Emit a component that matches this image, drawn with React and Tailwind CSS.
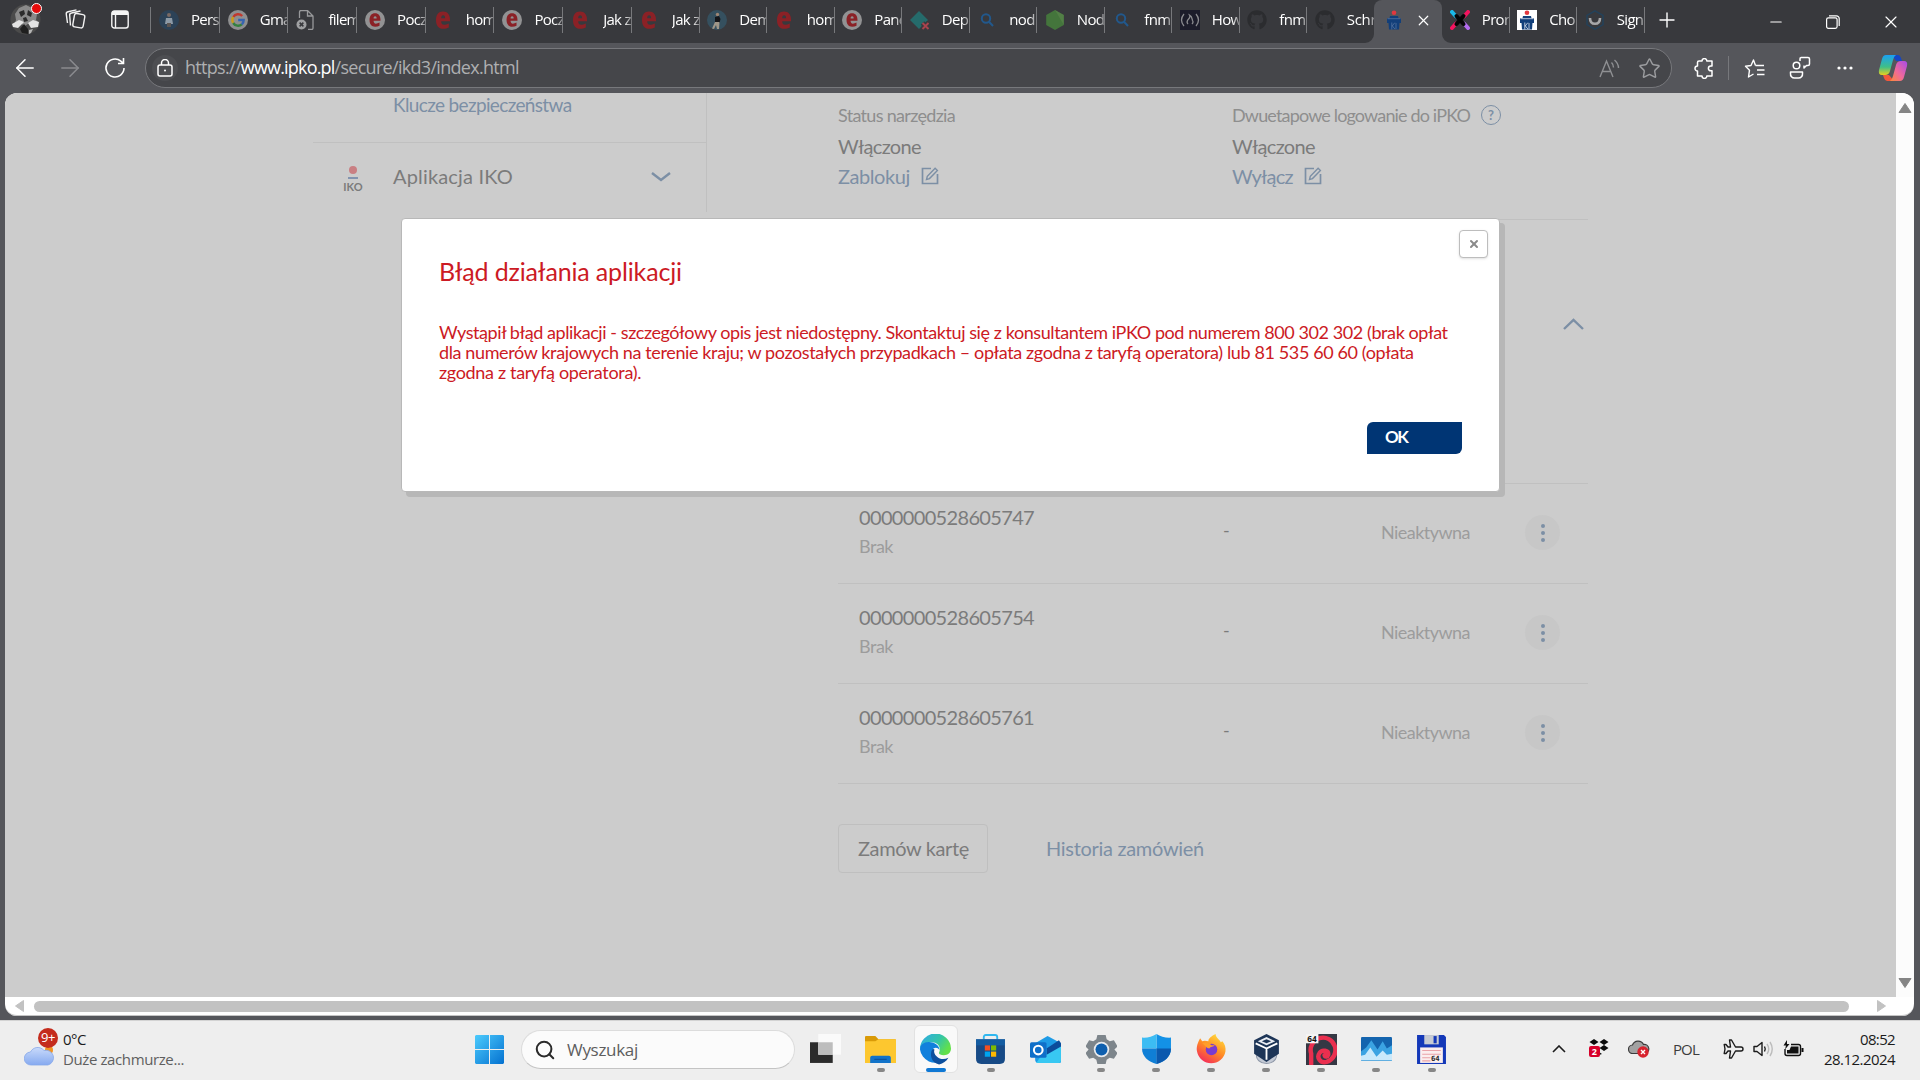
import { Plus, X, Minus, ArrowLeft, ArrowRight, Star, Search } from "lucide-react";
import { FaGithub } from "react-icons/fa";

/* ---------- favicons ---------- */

function Favicon({ kind }) {
  const s = { width: 20, height: 20, viewBox: "0 0 20 20", className: "shrink-0" };
  switch (kind) {
    case "person":
      return (
        <svg {...s}>
          <circle cx="10" cy="10" r="10" fill="#2c4257" />
          <circle cx="10" cy="5" r="2" fill="#7a6a64" />
          <path d="M7 8h6l1 6H6z" fill="#8d9aa6" />
          <path d="M8 13h4v4H8z" fill="#5c5552" />
        </svg>
      );
    case "walker":
      return (
        <svg {...s}>
          <circle cx="10" cy="10" r="10" fill="#35505f" />
          <circle cx="10.500" cy="4.500" r="1.700" fill="#9c8573" />
          <path d="M8 7l4-1 1.500 3-1 4H8z" fill="#14161a" />
          <path d="M8 12h4.500l-.5 7h-2l-1-4-2 4-2-.5z" fill="#9d9689" />
        </svg>
      );
    case "google":
      return (
        <svg {...s}>
          <circle cx="10" cy="10" r="10" fill="#8f8f90" />
          <g fill="none" strokeWidth="2.400">
            <path d="M14.200 6A5.700 5.700 0 0 0 5.200 7" stroke="#c0392f" />
            <path d="M5.200 7a5.700 5.700 0 0 0 0 6" stroke="#c99b1c" />
            <path d="M5.200 13a5.700 5.700 0 0 0 8.600 1.300" stroke="#34803f" />
            <path d="M13.800 14.300A5.700 5.700 0 0 0 15.700 10H10.200" stroke="#3564b0" />
          </g>
        </svg>
      );
    case "file":
      return (
        <svg {...s} fill="none" stroke="#98999b" strokeWidth="1.300">
          <path d="M3.500 8V2a1.500 1.500 0 0 1 1.500-1.500h6.500L17 6v12a1.500 1.500 0 0 1-1.500 1.500H12M11.500.500V6H17" />
          <circle cx="5.500" cy="14.500" r="5" fill="#9fa0a2" stroke="none" />
          <path d="M3.600 12.600l3.800 3.800M7.400 12.600l-3.800 3.800" stroke="#38393d" strokeWidth="1.500" />
        </svg>
      );
    case "ering":
    case "e":
      return (
        <svg {...s}>
          {kind === "ering" && <circle cx="10" cy="10" r="10" fill="#929293" />}
          <path
            transform={kind === "ering" ? "translate(2.200 2.100) scale(.78)" : "translate(-1 0)"}
            fillRule="evenodd"
            d="M10 1.500c4.600 0 7 3.300 7 8v1.700H8.200c0 2.400 1 3.600 2.900 3.600 1.500 0 2.900-.5 4.700-1.400v4c-1.700.9-3.500 1.400-5.600 1.400C5.500 18.800 3 15.400 3 10.200 3 4.900 5.500 1.500 10 1.500zM8.200 8.200h3.900c0-1.900-.6-2.900-1.900-2.900s-2 1-2 2.900z"
            fill="#8b2126"
          />
        </svg>
      );
    case "diamond":
      return (
        <svg {...s}>
          <path d="M9 1l9 9-9 9-9-9z" fill="#256b6b" />
          <path d="M12.500 13l6 6M18.500 13l-6 6" stroke="#38393d" strokeWidth="5" />
          <path d="M12.500 13l6 6M18.500 13l-6 6" stroke="#a8434d" strokeWidth="1.900" />
        </svg>
      );
    case "search":
      return (
        <svg {...s} fill="none" stroke="#22588c" strokeWidth="2">
          <circle cx="9" cy="8.500" r="4.200" />
          <path d="M12 11.700l4 4.300" />
        </svg>
      );
    case "node":
      return (
        <svg {...s}>
          <path d="M10 0l8.800 5v10L10 20 1.200 15V5z" fill="#44753c" />
          <path d="M10 0l8.800 5v10z" fill="#58834a" opacity=".7" />
        </svg>
      );
    case "fcc":
      return (
        <svg {...s}>
          <rect width="20" height="20" fill="#1c1c2b" />
          <g fill="none" stroke="#8b8b90" strokeWidth="1.300">
            <path d="M4 4q-5 6 0 12M16 4q5 6 0 12M8 14c-2-2-.5-4 1-5.500C10 7.500 10 6 9.500 5c3 1.500 2.500 4.500 3 5.500 1 1.500.5 2.500-.5 3.500" />
          </g>
        </svg>
      );
    case "github":
      return <FaGithub className="size-5 shrink-0 text-[#2b2c2f]" />;
    case "pko":
    case "pkow":
      return (
        <svg {...s}>
          {kind === "pkow" && <rect width="20" height="20" fill="#fff" />}
          <circle cx="10" cy="2.700" r="2.300" fill="#e2383f" />
          <path d="M6 6h8l.5 2.200H17V13h-1.500l-.5 6.500H5L4.500 13H3V8.200h2.500z" fill="#123f7a" />
          <path d="M3.500 8.700h13M7.800 12.500v7M8.200 16l2.600-3.300M8.200 15.700l2.800 3.500M12 13v6" stroke={kind === "pkow" ? "#dfe6f0" : "#55749f"} strokeWidth=".8" fill="none" />
        </svg>
      );
    case "xcolor":
      return (
        <svg {...s} strokeWidth="4" strokeLinecap="round">
          <path d="M2 2l4 4.500" stroke="#19b9e8" />
          <path d="M18 2l-4 4.500" stroke="#f5145f" />
          <path d="M2 18l4-4.500" stroke="#f5145f" />
          <path d="M18 18l-4-4.500" stroke="#b46cf0" />
          <path d="M6.500 6l7 8M13.500 6l-7 8" stroke="#050505" strokeWidth="4" />
        </svg>
      );
    default:
      return (
        <svg {...s} fill="none">
          <path d="M10 .800l8 4.600v9.200l-8 4.600-8-4.600V5.400z" stroke="#23415a" strokeWidth="1.500" />
          <path d="M5 8c0 4 2 5.800 5 5.800S15 12 15 8" stroke="#a6a7a9" strokeWidth="2.600" />
        </svg>
      );
  }
}

function Tab({ icon, label, wide }) {
  return (
    <div className={`flex h-[43px] shrink-0 items-center pl-2 ${wide ? "w-[68.700px]" : "w-[67.500px]"}`}>
      <div className="mb-1 flex h-[26px] flex-1 items-center border-r border-[#77787b]">
        <Favicon kind={icon} />
        <span className="-mt-0.5 ml-3 w-[27px] flex-1 overflow-hidden whitespace-nowrap text-[15px] leading-6 tracking-[-0.700px] text-white [mask-image:linear-gradient(to_right,#000_75%,#0006)]">
          {label}
        </span>
      </div>
    </div>
  );
}

const firstTabs = [
  ["person", "Pers"], ["google", "Gma"], ["file", "filem"], ["ering", "Pocz"], ["e", "hom"], ["ering", "Pocz"], ["e", "Jak z"],
];
const middleTabs = [
  ["e", "Jak z"], ["walker", "Dem"], ["e", "hom"], ["ering", "Pane"], ["diamond", "Dep"], ["search", "nod"],
  ["node", "Nod"], ["search", "fnm"], ["fcc", "How"], ["github", "fnm"],
];
const lastTabs = [["xcolor", "Pror"], ["pkow", "Cho"], ["sign", "Sign"]];

function TabStrip() {
  return (
    <div className="flex h-[43px] items-start bg-[#38393d]">
      <div className="flex h-[43px] w-[151px] shrink-0 items-center pb-1 pl-[10px]">
        <div className="relative size-[31px]">
          <svg width="31" height="31" viewBox="0 0 31 31">
            <circle cx="15.500" cy="15.500" r="15" fill="#4b4b4b" />
            <path d="M5 10l4-6 7-3 6 3 5 6-1 6 2 2-4 2-5-1-4 3-5-3-6 2 2-5z" fill="#8a8a8a" />
            <path d="M9 8l5-2 1 4-4 3zM18 6l4 3-1 4-4-2zM13 14l3-1 2 4-4 1z" fill="#2b2b2b" />
            <path d="M2 20l7-4 5 2-6 6-5-1zM18 19l5-3 6 2-1 5-7 1z" fill="#e4e4e4" />
            <path d="M10 25l4-5 4 5 0 5-6-1z" fill="#1f1f1f" />
            <path d="M19 26l4-1-2 4-2 1z" fill="#b5b5b5" />
          </svg>
          <span className="absolute -top-px right-[-1px] size-[11px] rounded-full border border-white bg-[#e50b0b]" />
        </div>
        <svg className="ml-6" width="21" height="21" viewBox="0 0 21 21" fill="none" stroke="#f2f2f2" strokeWidth="1.400">
          <rect x="8.500" y="5" width="10.500" height="13.500" rx="2.200" transform="rotate(10 14 12)" />
          <path d="M5.500 16.500l-.8-10A2.200 2.200 0 0 1 6.500 4l9-2M2.500 14L1.300 5.300A2.200 2.200 0 0 1 3 2.800L11.500.900" />
        </svg>
        <svg className="ml-[25px]" width="18" height="19" viewBox="0 0 18 19" fill="none" stroke="#f5f5f5" strokeWidth="1.400">
          <rect x=".8" y="1" width="16.400" height="17" rx="2.500" />
          <path d="M1 3h16" strokeWidth="4" />
          <path d="M4.500 4v14" />
        </svg>
        <span className="ml-auto h-[26px] w-px bg-[#77787b]" />
      </div>
      {firstTabs.map(([icon, label], i) => <Tab key={i} icon={icon} label={label} wide />)}
      {middleTabs.map(([icon, label], i) => <Tab key={i} icon={icon} label={label} />)}
      <div className="flex h-[43px] w-[67px] shrink-0 items-center pb-1 pl-[8px]">
        <Favicon kind="github" />
        <span className="-mt-0.5 ml-3 flex-1 overflow-hidden whitespace-nowrap text-[15px] leading-6 tracking-[-0.300px] text-white [mask-image:linear-gradient(to_right,#000_75%,#0006)]">Schr</span>
      </div>
      <div className="relative flex h-[43px] w-[68px] shrink-0 items-center rounded-t-lg bg-[#55565b] pb-1 pl-[10px]">
        <svg className="absolute bottom-0 left-[-9px]" width="9" height="9"><path d="M9 0v9H0a9 9 0 0 0 9-9z" fill="#55565b" /></svg>
        <svg className="absolute bottom-0 right-[-9px]" width="9" height="9"><path d="M0 0v9h9a9 9 0 0 1-9-9z" fill="#55565b" /></svg>
        <Favicon kind="pko" />
        <X className="ml-[11px] mt-0.5 size-[17px] text-white" strokeWidth={1.7} />
      </div>
      {lastTabs.map(([icon, label], i) => <Tab key={i} icon={icon} label={label} />)}
      <div className="flex h-[43px] flex-1 items-center justify-between pb-1 pl-[11px] pr-[19px]">
        <Plus className="size-6 text-white" strokeWidth={1.4} />
        <div className="mt-1 flex items-center gap-[41px] text-white">
          <Minus className="size-[18px]" strokeWidth={1.4} />
          <svg width="14" height="14" viewBox="0 0 14 14" fill="none" stroke="#fff" strokeWidth="1.200">
            <rect x=".6" y="2.800" width="10.500" height="10.500" rx="1.800" />
            <path d="M3 .8h7.400a2.800 2.800 0 0 1 2.800 2.800V11" />
          </svg>
          <X className="size-[20px]" strokeWidth={1.4} />
        </div>
      </div>
    </div>
  );
}

function Toolbar() {
  return (
    <div className="flex h-[50px] items-center bg-[#55565b] text-white">
      <ArrowLeft className="ml-[11px] size-7 shrink-0" strokeWidth={1.3} />
      <ArrowRight className="ml-[17px] size-7 shrink-0 text-[#8a8b8f]" strokeWidth={1.3} />
      <svg className="ml-[20px] shrink-0" width="22" height="22" viewBox="0 0 22 22" fill="none" stroke="#fff" strokeWidth="1.600">
        <path d="M20 11a9 9 0 1 1-3.200-6.900L19 6M19.500 1v5.500H14" />
      </svg>
      <div className="ml-[19px] flex h-10 w-[1527px] shrink-0 items-center rounded-full border border-[#77787c] bg-[#45464a] pl-[6px] pr-[10px]">
        <span className="flex size-[26px] items-center justify-center rounded-full bg-[#4d4e52]">
          <svg width="16" height="18" viewBox="0 0 16 18" fill="none" stroke="#fff" strokeWidth="1.500">
            <rect x="1" y="6" width="14" height="11" rx="2" />
            <path d="M4.500 6V4a3.500 3.500 0 0 1 7 0v2" />
            <circle cx="8" cy="11.500" r="1" fill="#fff" stroke="none" />
          </svg>
        </span>
        <span className="-mt-0.5 ml-[7px] whitespace-nowrap text-[18px] leading-7 tracking-[-0.7px] text-[#aeafb1]">
          https://<span className="tracking-[-0.820px] text-white">www.ipko.pl</span>/secure/ikd3/index.html
        </span>
        <svg className="ml-auto" width="21" height="19" viewBox="0 0 21 19" fill="none" stroke="#8f9093" strokeWidth="1.400">
          <path d="M1 18L7.500 2 14 18M3.300 12.500h8.400M12.500 3.500q2 2 2 5M15.500 1q4 3.500 4 8" />
        </svg>
        <Star className="ml-[18px] size-[23px] text-[#9b9c9f]" strokeWidth={1.5} />
      </div>
      <svg className="ml-[22px] shrink-0" width="20" height="21" viewBox="0 0 20 21" fill="none" stroke="#fff" strokeWidth="1.500">
        <path d="M5 3h3a2.400 2.400 0 0 1 4.800 0H18v5h-1.200a2.400 2.400 0 0 0 0 4.800H18v5.200h-5.200a2.400 2.400 0 0 1-4.800 0H3.500v-5a2.500 2.500 0 0 1 0-5V4.500A1.500 1.500 0 0 1 5 3z" strokeLinejoin="round" />
      </svg>
      <span className="ml-[14px] h-6 w-px bg-[#77787c]" />
      <svg className="ml-[15px] shrink-0" width="22" height="21" viewBox="0 0 22 21" fill="none" stroke="#fff" strokeWidth="1.400" strokeLinejoin="round">
        <path d="M11.500 7.500L9.500 2 7 7.500l-5.500.7 4 4L4.500 19l5-3M11.500 7.500H20M13 12h7.500M13 16.500h7.500" />
      </svg>
      <svg className="ml-[23px] shrink-0" width="22" height="24" viewBox="0 0 22 24" fill="none" stroke="#fff" strokeWidth="1.500" strokeLinejoin="round">
        <circle cx="7.500" cy="9.500" r="3.300" />
        <path d="M1.500 16h12v1.500a4 4 0 0 1-4 4.500h-4a4 4 0 0 1-4-4.500zM12 1.500h7a1.500 1.500 0 0 1 1.500 1.500v5A1.500 1.500 0 0 1 19 9.500h-1.500L15 12V9.500M12 1.500A1.500 1.500 0 0 0 11 3v2" />
      </svg>
      <svg className="ml-[25px] shrink-0" width="18" height="6" fill="#fff">
        <circle cx="3" cy="3" r="1.600" /><circle cx="9" cy="3" r="1.600" /><circle cx="15" cy="3" r="1.600" />
      </svg>
      <svg className="ml-[24px] shrink-0" width="30" height="28" viewBox="0 0 30 28">
        <defs>
          <linearGradient id="cpa" x1="0" y1="0" x2="0" y2="1"><stop stopColor="#1ba1f2" /><stop offset=".6" stopColor="#3fbf87" /><stop offset="1" stopColor="#e8d01f" /></linearGradient>
          <linearGradient id="cpb" x1="1" y1="0" x2="0" y2="1"><stop stopColor="#a84be8" /><stop offset=".55" stopColor="#f0699a" /><stop offset="1" stopColor="#fb8b3a" /></linearGradient>
        </defs>
        <path d="M14 1h6q2 0 3 3l1 3h-6z" fill="#1546c4" />
        <path d="M8 1h10q-2 1-3 5l-3 11q-1 4-5 4H4q-4 0-3-5L4 5q1-4 4-4z" fill="url(#cpa)" />
        <path d="M16 27H9q-2 0-3-3l-1-3h6z" fill="#f4573c" />
        <path d="M22 27H12q2-1 3-5l3-11q1-4 5-4h3q4 0 3 5l-3 11q-1 4-4 4z" fill="url(#cpb)" />
      </svg>
    </div>
  );
}

/* ---------- bank page ---------- */

function EditIcon() {
  return (
    <svg className="ml-[11px] shrink-0" width="18" height="18" viewBox="0 0 18 18" fill="none" stroke="#7c8fa5" strokeWidth="1.700">
      <path d="M10 1.500H1.500v15h15V7" />
      <path d="M5.500 12.500l.8-3.200 7.800-8 2.300 2.300-7.900 8z" strokeWidth="1.400" />
    </svg>
  );
}

function ToolStatus({ title, action, help, actionClass }) {
  return (
    <div className="w-[394px] shrink-0">
      <div className="flex h-6 items-center whitespace-nowrap text-[18px] leading-6 text-[#8e8e8e]">
        <span className={help ? "tracking-[-0.840px]" : "tracking-[-0.690px]"}>{title}</span>
        {help && (
          <span className="ml-[11px] flex size-5 items-center justify-center rounded-full border-[1.500px] border-[#7c8fa5] text-[13px] font-bold leading-none text-[#7c8fa5]">?</span>
        )}
      </div>
      <div className="mt-[7px] text-[20px] leading-6 tracking-[-0.650px] text-[#7b7b7b]">Włączone</div>
      <div className="mt-[6px] flex h-6 items-center text-[20px] leading-6 text-[#7c8fa5]">
        <span className={actionClass}>{action}</span>
        <EditIcon />
      </div>
    </div>
  );
}

function CardRow({ number }) {
  return (
    <div className="flex h-[100px] items-center border-b border-[#c0c0c0] pb-0.5 pl-[21px]">
      <div className="w-[364px] pb-0.5">
        <div className="text-[20px] leading-6 tracking-[-0.660px] text-[#7b7b7b]">{number}</div>
        <div className="mt-[5px] text-[18px] leading-6 tracking-[-0.480px] text-[#9c9c9c]">Brak</div>
      </div>
      <div className="w-[158px] pb-1.5 text-[18px] leading-6 text-[#7b7b7b]">-</div>
      <div className="w-[144px] pb-0.5 text-[18px] leading-6 tracking-[-0.540px] text-[#9c9c9c]">Nieaktywna</div>
      <div className="flex size-[35px] flex-col items-center justify-center gap-[3px] rounded-full bg-[#c7c7c7]">
        <span className="size-1 rounded-full bg-[#7c8fa5]" />
        <span className="size-1 rounded-full bg-[#7c8fa5]" />
        <span className="size-1 rounded-full bg-[#7c8fa5]" />
      </div>
    </div>
  );
}

function BankPage() {
  return (
    <div className="flex h-[904px] flex-1 bg-[#cccccc] pl-[308px] font-['Lato',sans-serif]">
      <aside className="h-[119px] w-[394px] shrink-0 border-r border-[#c0c0c0]">
        <div className="h-[50px] border-b border-[#c0c0c0] pl-[80px]">
          <div className="text-[19px] leading-6 tracking-[-0.640px] text-[#7c8fa5]">Klucze bezpieczeństwa</div>
        </div>
        <div className="flex h-[67px] items-center pl-[30px]">
          <div className="mt-1.5 flex w-5 flex-col items-center">
            <span className="size-2 rounded-full bg-[#c97f83]" />
            <span className="mt-[3px] h-[2px] w-[10px] bg-[#8294b0]" />
            <span className="mt-[2px] text-[11px] font-bold leading-[12px] text-[#7b7b7b]">IKO</span>
          </div>
          <span className="mb-0.5 ml-[30px] w-[258px] text-[20px] leading-6 tracking-[0.170px] text-[#7b7b7b]">Aplikacja IKO</span>
          <svg width="20" height="10" viewBox="0 0 20 10" fill="none" stroke="#7c8fa5" strokeWidth="2.400"><path d="M1 1l9 7 9-7" /></svg>
        </div>
      </aside>
      <section className="ml-[131px] w-[750px]">
        <div className="flex h-[127px] border-b border-[#c0c0c0] pt-[10px]">
          <ToolStatus title="Status narzędzia" action="Zablokuj" actionClass="tracking-[-0.440px]" />
          <ToolStatus title="Dwuetapowe logowanie do iPKO" action="Wyłącz" actionClass="tracking-[-0.800px]" help />
        </div>
        <div className="flex h-[264px] justify-end border-b border-[#c0c0c0] pr-1 pt-[98px]">
          <svg width="21" height="13" viewBox="0 0 21 13" fill="none" stroke="#7c8fa5" strokeWidth="2.400"><path d="M1 11l9.500-9L20 11" /></svg>
        </div>
        <CardRow number="0000000528605747" />
        <CardRow number="0000000528605754" />
        <CardRow number="0000000528605761" />
        <div className="mt-10 flex items-center whitespace-nowrap text-[20px] leading-6">
          <div className="flex h-[49px] w-[150px] items-center rounded border border-[#bfbfbf] pb-0.5 pl-[19px] tracking-[-0.370px] text-[#7b7b7b]">Zamów kartę</div>
          <div className="ml-[58px] pb-0.5 tracking-[-0.300px] text-[#7c8fa5]">Historia zamówień</div>
        </div>
      </section>
    </div>
  );
}

function ErrorDialog() {
  return (
    <div className="absolute left-[396px] top-[125px] h-[274px] w-[1099px] rounded border border-[#b8b8b8] bg-white font-['Lato',sans-serif] text-[#cc1a24] shadow-[5px_5px_0_#b7b7b7]">
      <button className="absolute right-[11px] top-[11px] flex h-7 w-[29px] items-center justify-center rounded border border-[#bdbdbd] bg-white shadow-sm">
        <X className="size-3 text-[#8a8a8a]" strokeWidth={4} />
      </button>
      <div className="pl-[37px] pt-[36px]">
        <h1 className="text-[25px] leading-8 tracking-[-0.150px]">Błąd działania aplikacji</h1>
        <p className="mt-[35px] whitespace-nowrap text-[18px] leading-5">
          <span className="block tracking-[-0.420px]">Wystąpił błąd aplikacji - szczegółowy opis jest niedostępny. Skontaktuj się z konsultantem iPKO pod numerem 800 302 302 (brak opłat</span>
          <span className="block tracking-[-0.380px]">dla numerów krajowych na terenie kraju; w pozostałych przypadkach – opłata zgodna z taryfą operatora) lub 81 535 60 60 (opłata</span>
          <span className="block tracking-[-0.320px]">zgodna z taryfą operatora).</span>
        </p>
        <button className="ml-[928px] mt-10 block h-8 w-[95px] rounded-br-md rounded-tl-md bg-[#003574] pb-0.5 pl-[18px] text-left text-[17px] font-bold leading-[30px] tracking-[-1.500px] text-white">OK</button>
      </div>
    </div>
  );
}

function Viewport() {
  return (
    <div className="h-[927px] bg-[#55565b] pl-[5px] pr-[6px]">
      <main className="relative h-[923px] w-[1909px] rounded-xl bg-white">
        <div className="h-full overflow-hidden rounded-xl border-b border-[#c4c4c4]">
          <div className="flex">
            <BankPage />
            <div className="flex h-[904px] w-[18px] flex-col items-center justify-between bg-[#fcfcfc] pb-[9px] pt-[10px]">
              <svg width="14" height="10"><path d="M7 .500L13 9.500H1z" fill="#858585" stroke="#858585" strokeLinejoin="round" /></svg>
              <svg width="14" height="10"><path d="M7 9.500L13 .500H1z" fill="#858585" stroke="#858585" strokeLinejoin="round" /></svg>
            </div>
          </div>
          <div className="flex h-[18px] items-center pl-[10px]">
            <svg width="9" height="12"><path d="M.500 6L8.500.500v11z" fill="#c2c2c2" stroke="#c2c2c2" strokeLinejoin="round" /></svg>
            <span className="ml-[10px] h-[11px] w-[1815px] rounded-full bg-[#c2c2c2]" />
            <svg className="ml-[28px]" width="9" height="12"><path d="M8.500 6L.500.500v11z" fill="#c2c2c2" stroke="#c2c2c2" strokeLinejoin="round" /></svg>
          </div>
        </div>
        <ErrorDialog />
      </main>
    </div>
  );
}

/* ---------- taskbar ---------- */

function AppIcon({ kind }) {
  const s = { width: 31, height: 31, viewBox: "0 0 30 30" };
  switch (kind) {
    case "taskview":
      return (
        <svg {...s}>
          <rect x="0" y="8" width="22" height="20" fill="#2b2b2b" />
          <rect x="8" y="0" width="22" height="20" fill="#fafafa" />
          <rect x="8" y="8" width="14" height="12" fill="#bdbdbd" />
        </svg>
      );
    case "folder":
      return (
        <svg {...s}>
          <path d="M0 3q0-1 1-1h9l3 3h16q1 0 1 1v6H0z" fill="#d99a07" />
          <path d="M0 7h10l3-2h16q1 0 1 1v22H0z" fill="#fdc72f" />
          <path d="M5 28v-5q0-2 2-2h16q2 0 2 2v5z" fill="#1273c9" />
          <path d="M9 24.500h12" stroke="#0b4f98" />
        </svg>
      );
    case "edge":
      return (
        <svg {...s}>
          <defs>
            <linearGradient id="ea" x1="0" x2="1" y2=".5"><stop stopColor="#2fa8ea" /><stop offset=".6" stopColor="#34c5a8" /><stop offset="1" stopColor="#62e04a" /></linearGradient>
          </defs>
          <path d="M0 15a15 15 0 0 1 30-1c0 4-3 6.500-7 6.500-3.500 0-5.500-1.200-4.300-3.200C20.500 12.500 17 8 11.500 8 6 8 1 11 0 15z" fill="url(#ea)" />
          <path d="M0 15c0-5 5-8 10-7 5 .4 9 3.500 8.800 7.500-2-3.500-6.500-2.500-7 1-.5 5 5 9.500 11.200 9 A15 15 0 0 1 0 15z" fill="#1180dc" />
          <path d="M11.800 15C9 20 11 28 18.500 29.500c4-1 7-3 9-6.500-4 2-8.500 1.500-11-1-2.700-2.300-3.400-5-2.500-7-.8-.8-1.700-.8-2.200 0z" fill="#0c4f9e" />
        </svg>
      );
    case "store":
      return (
        <svg {...s}>
          <path d="M8.500 5V3q0-2 2-2h9q2 0 2 2v2" fill="none" stroke="#2fb7ef" strokeWidth="1.800" />
          <path d="M1 5h28v19q0 5-5 5H6q-5 0-5-5z" fill="#174a86" />
          <path d="M1 5h28v6H1z" fill="#1464ad" opacity=".7" />
          <path d="M9.500 11h5v5h-5z" fill="#f25022" /><path d="M15.500 11h5v5h-5z" fill="#7fba00" />
          <path d="M9.500 17h5v5h-5z" fill="#00a4ef" /><path d="M15.500 17h5v5h-5z" fill="#ffb900" />
        </svg>
      );
    case "outlook":
      return (
        <svg {...s}>
          <path d="M5 9L17 2l13 7v18q0 1-2 1H8q-3 0-3-3z" fill="#1e9be6" />
          <path d="M15 15L30 9v17q0 2-2 2H6z" fill="#38c8f2" />
          <path d="M16 14L28 6l2 3v3L16 20z" fill="#0c4b9b" />
          <rect y="8" width="16" height="15" rx="1.500" fill="#0f6fc9" />
          <circle cx="8" cy="15.500" r="4.200" fill="none" stroke="#fff" strokeWidth="2" />
        </svg>
      );
    case "settings":
      return (
        <svg {...s}>
          <path d="M11 1h8l1 4 3 2 4-1 3.500 6-3 3 3 3.500L27 24l-4-1-3 2-1 4h-8l-1-4-3-2-4 1-3.500-5.500 3-3.500-3-3L3 6l4 1 3-2z" fill="#7d858b" />
          <circle cx="15" cy="15" r="7.500" fill="#e8ebee" />
          <circle cx="15" cy="15" r="5.800" fill="#0e5fae" />
        </svg>
      );
    case "shield":
      return (
        <svg {...s}>
          <path d="M15 0q6 4 14 3.500V14c0 8-6 12.500-14 15z" fill="#1391e6" />
          <path d="M15 0Q9 4 1 3.500V14h14z" fill="#3cbcf3" />
          <path d="M1 14h14v15C7 26.500 1 22 1 14z" fill="#0f7fd6" />
          <path d="M15 14h14c0 8-6 12.500-14 15z" fill="#0b59ae" />
        </svg>
      );
    case "firefox":
      return (
        <svg {...s}>
          <defs><linearGradient id="ff" x1=".8" y1="0" x2=".2" y2="1"><stop stopColor="#ffe03d" /><stop offset=".5" stopColor="#ff8a25" /><stop offset="1" stopColor="#f3245f" /></linearGradient></defs>
          <path d="M19 0c0 4 4 5 5 8l1.500-1C28 10 29 13 28.500 17A14 14 0 0 1 1 17C0 12 2 8 4 4l2 3c2-1 4-.5 6 0 0-3 3-5 7-7z" fill="url(#ff)" />
          <circle cx="15" cy="15" r="5.600" fill="#7a3bd0" />
          <path d="M6 9c4-2 7 0 9 2l3 0c-1 2-4 1-5 3-3 0-4-3-7-5z" fill="#ff9e2c" />
        </svg>
      );
    case "vbox":
      return (
        <svg {...s}>
          <path d="M5 19q0 9 10 9.500Q25 28 25 19" fill="#c4cad5" stroke="#8f98a8" />
          <path d="M15 0l12 6v13l-12 8-12-8V6z" fill="#1d3557" />
          <path d="M15 3l8.500 4L15 11 6.500 7z" fill="#e9edf3" />
          <path d="M15 5l4.500 2L15 9l-4.500-2z" fill="#1d3557" />
          <path d="M4.500 9L15 14v11M25.500 9L15 14" stroke="#fff" strokeWidth="1.800" fill="none" />
        </svg>
      );
    case "spiral":
      return (
        <svg {...s}>
          <rect width="30" height="30" fill="#353844" />
          <path d="M5 29V19a12 12 0 1 1 15 8c-6 1.500-10-4-7-8.500 2.500-4 9-2.500 8.500 1.500-.5 2-3 2.500-3.500.5" fill="none" stroke="#ea2f4f" strokeWidth="4.300" strokeLinecap="round" />
          <rect width="12" height="9" fill="#f4f4f4" />
          <text x="1.200" y="7.500" fontFamily="Open Sans, sans-serif" fontSize="8" fontWeight="700" fill="#111">64</text>
        </svg>
      );
    case "monitor":
      return (
        <svg {...s}>
          <rect y="3" width="30" height="23" rx="1" fill="#1464ae" />
          <path d="M0 17l5-4 5-7 6 9 5-8 4 7 5-3v15H0z" fill="#3ba3e2" />
          <path d="M0 21l4-1 5-7 6 9 6-6 4 4 5-1v6.500H0z" fill="#c9e9fb" />
        </svg>
      );
    default:
      return (
        <svg {...s}>
          <path d="M1 1h26l2 2v26H1z" fill="#1438b8" />
          <rect x="8" y="1" width="14" height="9" fill="#c7cbd3" />
          <rect x="17" y="2" width="3" height="7" fill="#1438b8" />
          <rect x="4" y="13" width="22" height="15" fill="#fbeeee" />
          <path d="M6 16h18M6 19.500h18M6 23h8M6 26h8" stroke="#e9a3a8" />
          <text x="14.500" y="26.500" fontFamily="DejaVu Sans Mono, monospace" fontSize="7" fontWeight="700" fill="#222">64</text>
        </svg>
      );
  }
}

const apps = ["taskview", "folder", "edge", "store", "outlook", "settings", "shield", "firefox", "vbox", "spiral", "monitor", "floppy"];

function TaskApp({ kind }) {
  const idle = kind === "taskview" || kind === "outlook";
  const active = kind === "edge";
  return (
    <div className="flex w-[55.100px] shrink-0 justify-center">
      <div className={`flex h-12 w-[44px] flex-col items-center rounded-md border ${idle || active ? "" : "justify-between"} ${active ? "justify-between border-[#e2e2e2] bg-[#f9f9f9]" : "border-transparent"} pt-[8px]`}>
        <AppIcon kind={kind} />
        {!idle && <span className={active ? "h-1 w-5 rounded-full bg-[#0f78d4]" : "h-1 w-2 rounded-full bg-[#878787]"} />}
      </div>
    </div>
  );
}

function Taskbar() {
  return (
    <footer className="flex h-[60px] items-center border-t border-[#d3d3d3] bg-[#eeeeee] pb-1 text-[15px] leading-5 text-[#1b1b1b]">
      <div className="flex w-[475px] shrink-0 items-center pl-6">
        <div className="relative h-10 w-8">
          <svg className="absolute left-0 top-[17px]" width="32" height="20" viewBox="0 0 32 20">
            <defs><linearGradient id="cl" x1="0" y1="0" x2="0" y2="1"><stop stopColor="#c9dafa" /><stop offset="1" stopColor="#86aaf0" /></linearGradient></defs>
            <circle cx="25" cy="4" r="4" fill="#f29423" />
            <path d="M7 19a6.500 6.500 0 0 1-.5-13A8 8 0 0 1 20 4.500 7.300 7.300 0 1 1 24 19z" fill="url(#cl)" stroke="#86a8ea" strokeWidth=".8" />
          </svg>
          <span className="absolute left-[14px] top-[-1px] flex size-5 items-center justify-center rounded-full bg-[#c42b1c] text-[13px] leading-none tracking-tight text-white">9+</span>
        </div>
        <div className="ml-[7px] whitespace-nowrap">
          <div className="tracking-[-0.480px]">0°C</div>
          <div className="tracking-[-0.390px] text-[#5f5f5f]">Duże zachmurze...</div>
        </div>
      </div>
      <svg className="mt-[2px] shrink-0" width="29" height="29" viewBox="0 0 29 29">
        <defs><linearGradient id="wn" x2="1" y2="1"><stop stopColor="#4ccbfd" /><stop offset="1" stopColor="#0471d0" /></linearGradient></defs>
        <path d="M1 0h13v14H0V1zM15 0h13l1 1v13H15zM0 15h14v14H1l-1-1zM15 15h14v13l-1 1H15z" fill="url(#wn)" />
      </svg>
      <div className="ml-[17px] mt-0.5 flex h-[39px] w-[274px] shrink-0 items-center rounded-full border border-[#dcdcdc] border-b-[#c4c4c4] bg-[#fbfbfb] pl-[12px]">
        <Search className="size-[22px] text-[#2a2a2a]" strokeWidth={2.2} />
        <span className="ml-[11px] text-[17px] tracking-[-0.300px] text-[#5e5e5e]">Wyszukaj</span>
      </div>
      <div className="ml-[3px] mt-[1px] flex shrink-0">
        {apps.map((kind) => <TaskApp key={kind} kind={kind} />)}
      </div>
      <div className="ml-auto flex items-center pr-[25px]">
        <svg width="14" height="8" fill="none" stroke="#1b1b1b" strokeWidth="1.600"><path d="M1 7l6-6 6 6" /></svg>
        <div className="relative ml-[23px] h-[19px] w-5">
          <svg width="20" height="19" viewBox="0 0 20 19"><path d="M5 0l4.500 3L5 6 .5 3zM15 0l4.500 3L15 6l-4.500-3zM15 6l4.500 3-4.500 3-4.500-3zM10 13l3 2-3 1z" fill="#0b0b0b" /></svg>
          <span className="absolute bottom-[1px] left-0 flex size-[11px] items-center justify-center rounded-[2px] bg-[#d6002a] text-[9px] font-bold leading-none text-white">2</span>
        </div>
        <svg className="ml-[19px]" width="22" height="18" viewBox="0 0 22 18">
          <path d="M5 13.500A4.200 4.200 0 0 1 4.500 5 6 6 0 0 1 15.500 4.500 4.500 4.500 0 0 1 17 13.500z" fill="#a2a2a2" stroke="#3c3c3c" strokeWidth="1.200" />
          <circle cx="15" cy="12" r="5.700" fill="#d8232e" />
          <path d="M13 10l4 4M17 10l-4 4" stroke="#fff" strokeWidth="1.400" />
        </svg>
        <span className="ml-[23px] tracking-[-0.800px] text-[#3c3c3c]">POL</span>
        <svg className="ml-[24px]" width="21" height="20" viewBox="0 0 21 20" fill="none" stroke="#1b1b1b" strokeWidth="1.400" strokeLinejoin="round">
          <path d="M7 8L5 8 3 5.500H1.200L2 10l-.8 4.500H3L5 12h2.500L6.500 19h2L12.500 12H18a2 2 0 0 0 0-4h-5.500L8.500 1h-2l1 7z" />
        </svg>
        <svg className="ml-[9px]" width="21" height="18" viewBox="0 0 21 18" fill="none" stroke="#1b1b1b" strokeWidth="1.400" strokeLinejoin="round">
          <path d="M1 6.500h3L9 2.500v13l-5-4H1z" />
          <path d="M11.500 6.500q1.500 2.500 0 5" />
          <path d="M14 4q3.500 5 0 10M17 2q4.500 7 0 14" stroke="#bcbcbc" />
        </svg>
        <svg className="ml-[9px]" width="21" height="18" viewBox="0 0 21 18">
          <path d="M8 4.500h7.500a2 2 0 0 1 2 2v7a2 2 0 0 1-2 2H4a2 2 0 0 1-2-2V9" fill="none" stroke="#111" strokeWidth="1.400" />
          <path d="M8 6.500h7.500v7H4V10h2.500zM18.500 8h2v4h-2zM4 0L.5 5.500H3L2 9.500 6.500 4H4z" fill="#111" />
        </svg>
        <div className="ml-[20px] text-right">
          <div className="tracking-[-0.650px]">08:52</div>
          <div className="tracking-[-0.550px]">28.12.2024</div>
        </div>
      </div>
    </footer>
  );
}

export default function App() {
  return (
    <div className="h-[1080px] w-[1920px] overflow-hidden bg-[#55565b] font-['Open_Sans',sans-serif]">
      <TabStrip />
      <Toolbar />
      <Viewport />
      <Taskbar />
    </div>
  );
}
